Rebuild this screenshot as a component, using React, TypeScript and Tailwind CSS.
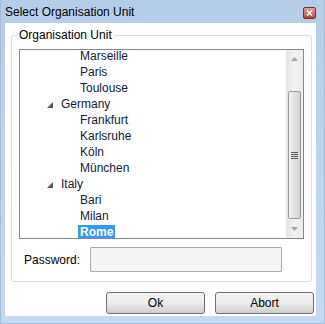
import React from "react";

const font = { fontFamily: '"Liberation Sans", Arial, sans-serif' };

type Row = { label: string; level: 0 | 1; expanded?: boolean; selected?: boolean };

const rows: Row[] = [
  { label: "Marseille", level: 1 },
  { label: "Paris", level: 1 },
  { label: "Toulouse", level: 1 },
  { label: "Germany", level: 0, expanded: true },
  { label: "Frankfurt", level: 1 },
  { label: "Karlsruhe", level: 1 },
  { label: "Köln", level: 1 },
  { label: "München", level: 1 },
  { label: "Italy", level: 0, expanded: true },
  { label: "Bari", level: 1 },
  { label: "Milan", level: 1 },
  { label: "Rome", level: 1, selected: true },
];

function Expander() {
  return (
    <svg width="6" height="6" viewBox="0 0 6 6" className="block">
      <polygon points="6,0 6,6 0,6" fill="#5a5a5a" />
    </svg>
  );
}

function TreeRow({ r }: { r: Row }) {
  return (
    <div className="h-[16px] flex items-center">
      {r.level === 0 ? (
        <div className="flex items-center pl-[27px]">
          <div className="w-[6px] mt-[1px]">
            <Expander />
          </div>
          <span className="ml-[8px] text-[12px] leading-[15px] text-[#10203a]">{r.label}</span>
        </div>
      ) : (
        <div className="pl-[58px] flex items-center">
          <span
            className={
              r.selected
                ? "px-[2px] h-[15px] leading-[15px] text-[12px] bg-[#3399ff] text-white font-bold"
                : "px-[2px] leading-[15px] text-[12px] text-[#10203a]"
            }
          >
            {r.label}
          </span>
        </div>
      )}
    </div>
  );
}

function Scrollbar() {
  return (
    <div className="w-[17px] h-full flex flex-col bg-gradient-to-r from-[#e6e6e6] via-[#f2f2f2] to-[#ececec]">
      <div className="h-[17px] flex items-center justify-center">
        <svg width="7" height="4" viewBox="0 0 7 4">
          <polygon points="3.5,0 7,4 0,4" fill="#a6a6a6" />
        </svg>
      </div>
      <div className="h-[24px]" />
      <div className="mx-[2px] h-[128px] rounded-[2px] border border-[#9a9a9a] bg-gradient-to-r from-[#f3f3f3] via-[#e2e2e2] to-[#d3d3d3] flex items-center justify-center">
        <div className="flex flex-col gap-[1px] w-[7px]">
          <div className="h-[1px] bg-[#5a5a5a]" />
          <div className="h-[1px] bg-[#5a5a5a]" />
          <div className="h-[1px] bg-[#5a5a5a]" />
          <div className="h-[1px] bg-[#5a5a5a]" />
        </div>
      </div>
      <div className="flex-1 flex items-center justify-center">
        <svg width="7" height="4" viewBox="0 0 7 4">
          <polygon points="0,0 7,0 3.5,4" fill="#a6a6a6" />
        </svg>
      </div>
    </div>
  );
}

function Button({ label }: { label: string }) {
  return (
    <button className="w-[99px] h-[22px] rounded-[3px] border border-[#707070] bg-gradient-to-b from-[#f2f2f2] via-[#ebebeb] to-[#cfcfcf] text-[12px] text-black leading-none flex items-center justify-center">
      {label}
    </button>
  );
}

export default function App() {
  return (
    <div
      style={font}
      className="w-[325px] h-[324px] bg-gradient-to-b from-[#b6cde9] to-[#c6d9f0] flex flex-col overflow-hidden border-l border-r border-b border-[#a7bcd6]"
    >
      {/* title bar */}
      <div className="h-[23px] flex items-center justify-between pl-[4px] pr-[8px]">
        <span className="text-[12px] text-black pt-[1px]">Select Organisation Unit</span>
        <div className="w-[13px] h-[12px] mt-[2px] rounded-[2px] border border-[#7b2c22] bg-gradient-to-b from-[#e4a192] to-[#b9443a] flex items-center justify-center">
          <svg width="7" height="6" viewBox="0 0 7 6">
            <path d="M1 0.5 L6 5.5 M6 0.5 L1 5.5" stroke="#ffffff" strokeWidth="1.6" />
          </svg>
        </div>
      </div>

      {/* client area */}
      <div className="ml-[4px] mr-[8px] h-[293px] bg-white flex flex-col">
        {/* group box */}
        <div className="relative ml-[6px] mr-[4px] mt-[12px] h-[247px] rounded-[3px] border border-[#d5dfe5] flex flex-col">
          <span className="absolute left-[5px] top-[-8px] bg-white px-[2px] text-[12px] leading-[15px] text-black">
            Organisation Unit
          </span>
          {/* tree */}
          <div className="mt-[13px] ml-[7px] mr-[7px] h-[190px] border border-[#828790] flex">
            <div className="flex-1 overflow-hidden">
              <div className="mt-[-2px]">
                {rows.map((r) => (
                  <TreeRow key={r.label} r={r} />
                ))}
              </div>
            </div>
            <Scrollbar />
          </div>
          {/* password */}
          <div className="mt-[8px] flex items-center">
            <span className="ml-[12px] w-[66px] text-[12px] text-black">Password:</span>
            <div className="w-[192px] h-[25px] border border-[#abadb3] bg-[#f4f4f4] rounded-[1px]" />
          </div>
        </div>
        {/* buttons */}
        <div className="mt-[10px] flex justify-end gap-[10px] mr-[2px]">
          <Button label="Ok" />
          <Button label="Abort" />
        </div>
      </div>
    </div>
  );
}
